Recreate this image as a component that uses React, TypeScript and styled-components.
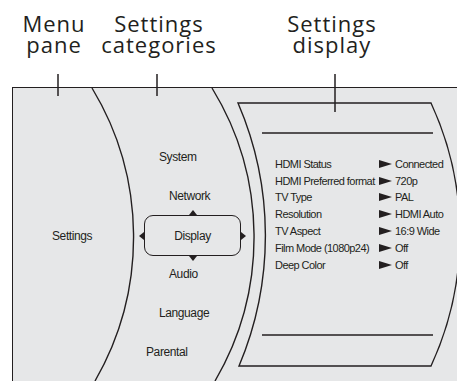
import React from "react";
import styled, { createGlobalStyle } from "styled-components";

const GlobalStyle = createGlobalStyle`
  html, body { margin: 0; padding: 0; background: #ffffff; }
  body { font-family: "Liberation Sans", Arial, sans-serif; color: #231f20; }
`;

const INK = "#231f20";
const GRAY = "#e6e7e8";

const Page = styled.div`
  position: relative;
  width: 457px;
  height: 381px;
  overflow: hidden;
  background: #ffffff;
`;

const Header = styled.header`
  display: flex;
  height: 87px;
  padding-top: 13px;
  box-sizing: border-box;
`;

const Caption = styled.div<{ $width: number; $left?: number }>`
  width: ${(p) => p.$width}px;
  margin-left: ${(p) => p.$left ?? 0}px;
  text-align: center;
  font-family: "Open Sans", "Liberation Sans", sans-serif;
  font-size: 22px;
  letter-spacing: 1px;
  color: ${INK};
`;

const CaptionLine = styled.span`
  display: block;
  height: 21px;
  line-height: 21px;
  white-space: nowrap;
`;

const Panel = styled.main`
  margin-left: 12px;
  height: 294px;
  border-left: 1.6px solid ${INK};
  border-top: 1.6px solid ${INK};
  background: ${GRAY};
  display: flex;
  box-sizing: border-box;
`;

const MenuPane = styled.section`
  width: 120px;
  padding: 140px 0 0 39px;
  box-sizing: border-box;
`;

const Label = styled.span`
  display: block;
  font-size: 12px;
  line-height: 16px;
  letter-spacing: -0.4px;
  white-space: nowrap;
`;

const Categories = styled.section`
  width: 116px;
  padding-top: 61px;
  display: flex;
  flex-direction: column;
  gap: 23px;
  box-sizing: border-box;
`;

const Category = styled(Label)<{ $indent: number }>`
  margin-left: ${(p) => p.$indent}px;
`;

const SelectedBox = styled.div<{ $indent: number }>`
  position: relative;
  margin: -12px 0 -13px ${(p) => p.$indent}px;
  width: 97px;
  height: 41px;
  box-sizing: border-box;
  border: 1.5px solid ${INK};
  border-radius: 9px;
  display: flex;
  align-items: center;
  justify-content: center;
`;

const Arrow = styled.span<{ $dir: "up" | "down" | "left" | "right" }>`
  position: absolute;
  width: 0;
  height: 0;
  ${(p) =>
    p.$dir === "up"
      ? `left: 43.5px; top: -6px; border-left: 4px solid transparent; border-right: 4px solid transparent; border-bottom: 5px solid ${INK};`
      : p.$dir === "down"
      ? `left: 43.5px; bottom: -6px; border-left: 4px solid transparent; border-right: 4px solid transparent; border-top: 5px solid ${INK};`
      : p.$dir === "left"
      ? `left: -6px; top: 15.5px; border-top: 4px solid transparent; border-bottom: 4px solid transparent; border-right: 5px solid ${INK};`
      : `right: -6px; top: 15.5px; border-top: 4px solid transparent; border-bottom: 4px solid transparent; border-left: 5px solid ${INK};`}
`;

const DisplayPane = styled.section`
  flex: 1;
  padding: 67.5px 0 0 26px;
  box-sizing: border-box;
`;

const InfoGrid = styled.div`
  display: grid;
  grid-template-columns: 104px 16px auto;
  grid-auto-rows: 16.8px;
  align-items: center;
  font-size: 11px;
  letter-spacing: -0.55px;
  white-space: nowrap;
`;

const Pointer = styled.span`
  width: 0;
  height: 0;
  border-top: 4px solid transparent;
  border-bottom: 4px solid transparent;
  border-left: 13px solid ${INK};
`;

const Drawing = styled.svg`
  position: absolute;
  left: 0;
  top: 0;
  pointer-events: none;
`;

const rows: [string, string][] = [
  ["HDMI Status", "Connected"],
  ["HDMI Preferred format", "720p"],
  ["TV Type", "PAL"],
  ["Resolution", "HDMI Auto"],
  ["TV Aspect", "16:9 Wide"],
  ["Film Mode (1080p24)", "Off"],
  ["Deep Color", "Off"],
];

export default function App() {
  return (
    <Page>
      <GlobalStyle />
      <Header>
        <Caption $width={80} $left={14}>
          <CaptionLine>Menu</CaptionLine>
          <CaptionLine>pane</CaptionLine>
        </Caption>
        <Caption $width={130}>
          <CaptionLine>Settings</CaptionLine>
          <CaptionLine>categories</CaptionLine>
        </Caption>
        <Caption $width={216}>
          <CaptionLine>Settings</CaptionLine>
          <CaptionLine>display</CaptionLine>
        </Caption>
      </Header>
      <Panel>
        <MenuPane>
          <Label>Settings</Label>
        </MenuPane>
        <Categories>
          <Category $indent={26}>System</Category>
          <Category $indent={36}>Network</Category>
          <SelectedBox $indent={11}>
            <Arrow $dir="up" />
            <Arrow $dir="down" />
            <Arrow $dir="left" />
            <Arrow $dir="right" />
            <Label>Display</Label>
          </SelectedBox>
          <Category $indent={36}>Audio</Category>
          <Category $indent={26}>Language</Category>
          <Category $indent={13}>Parental</Category>
        </Categories>
        <DisplayPane>
          <InfoGrid>
            {rows.map(([k, v]) => (
              <React.Fragment key={k}>
                <span>{k}</span>
                <Pointer />
                <span>{v}</span>
              </React.Fragment>
            ))}
          </InfoGrid>
        </DisplayPane>
      </Panel>
      <Drawing width={457} height={381} viewBox="0 0 457 381" fill="none" stroke={INK}>
        <g strokeWidth={1.5}>
          <path d="M58,74 V96" />
          <path d="M157,74 V96" />
          <path d="M335,74 V112" />
        </g>
        <g strokeWidth={1.4}>
          <path d="M92,88 A288,288 0 0 1 95,381" />
          <path d="M212,88 A285,285 0 0 1 215,381" />
          <path d="M238,103 H431 A313,313 0 0 1 431,366 H239 A335,335 0 0 0 238,103 Z" />
          <path d="M262,133 H433" />
          <path d="M262,335 H433" />
        </g>
      </Drawing>
    </Page>
  );
}
